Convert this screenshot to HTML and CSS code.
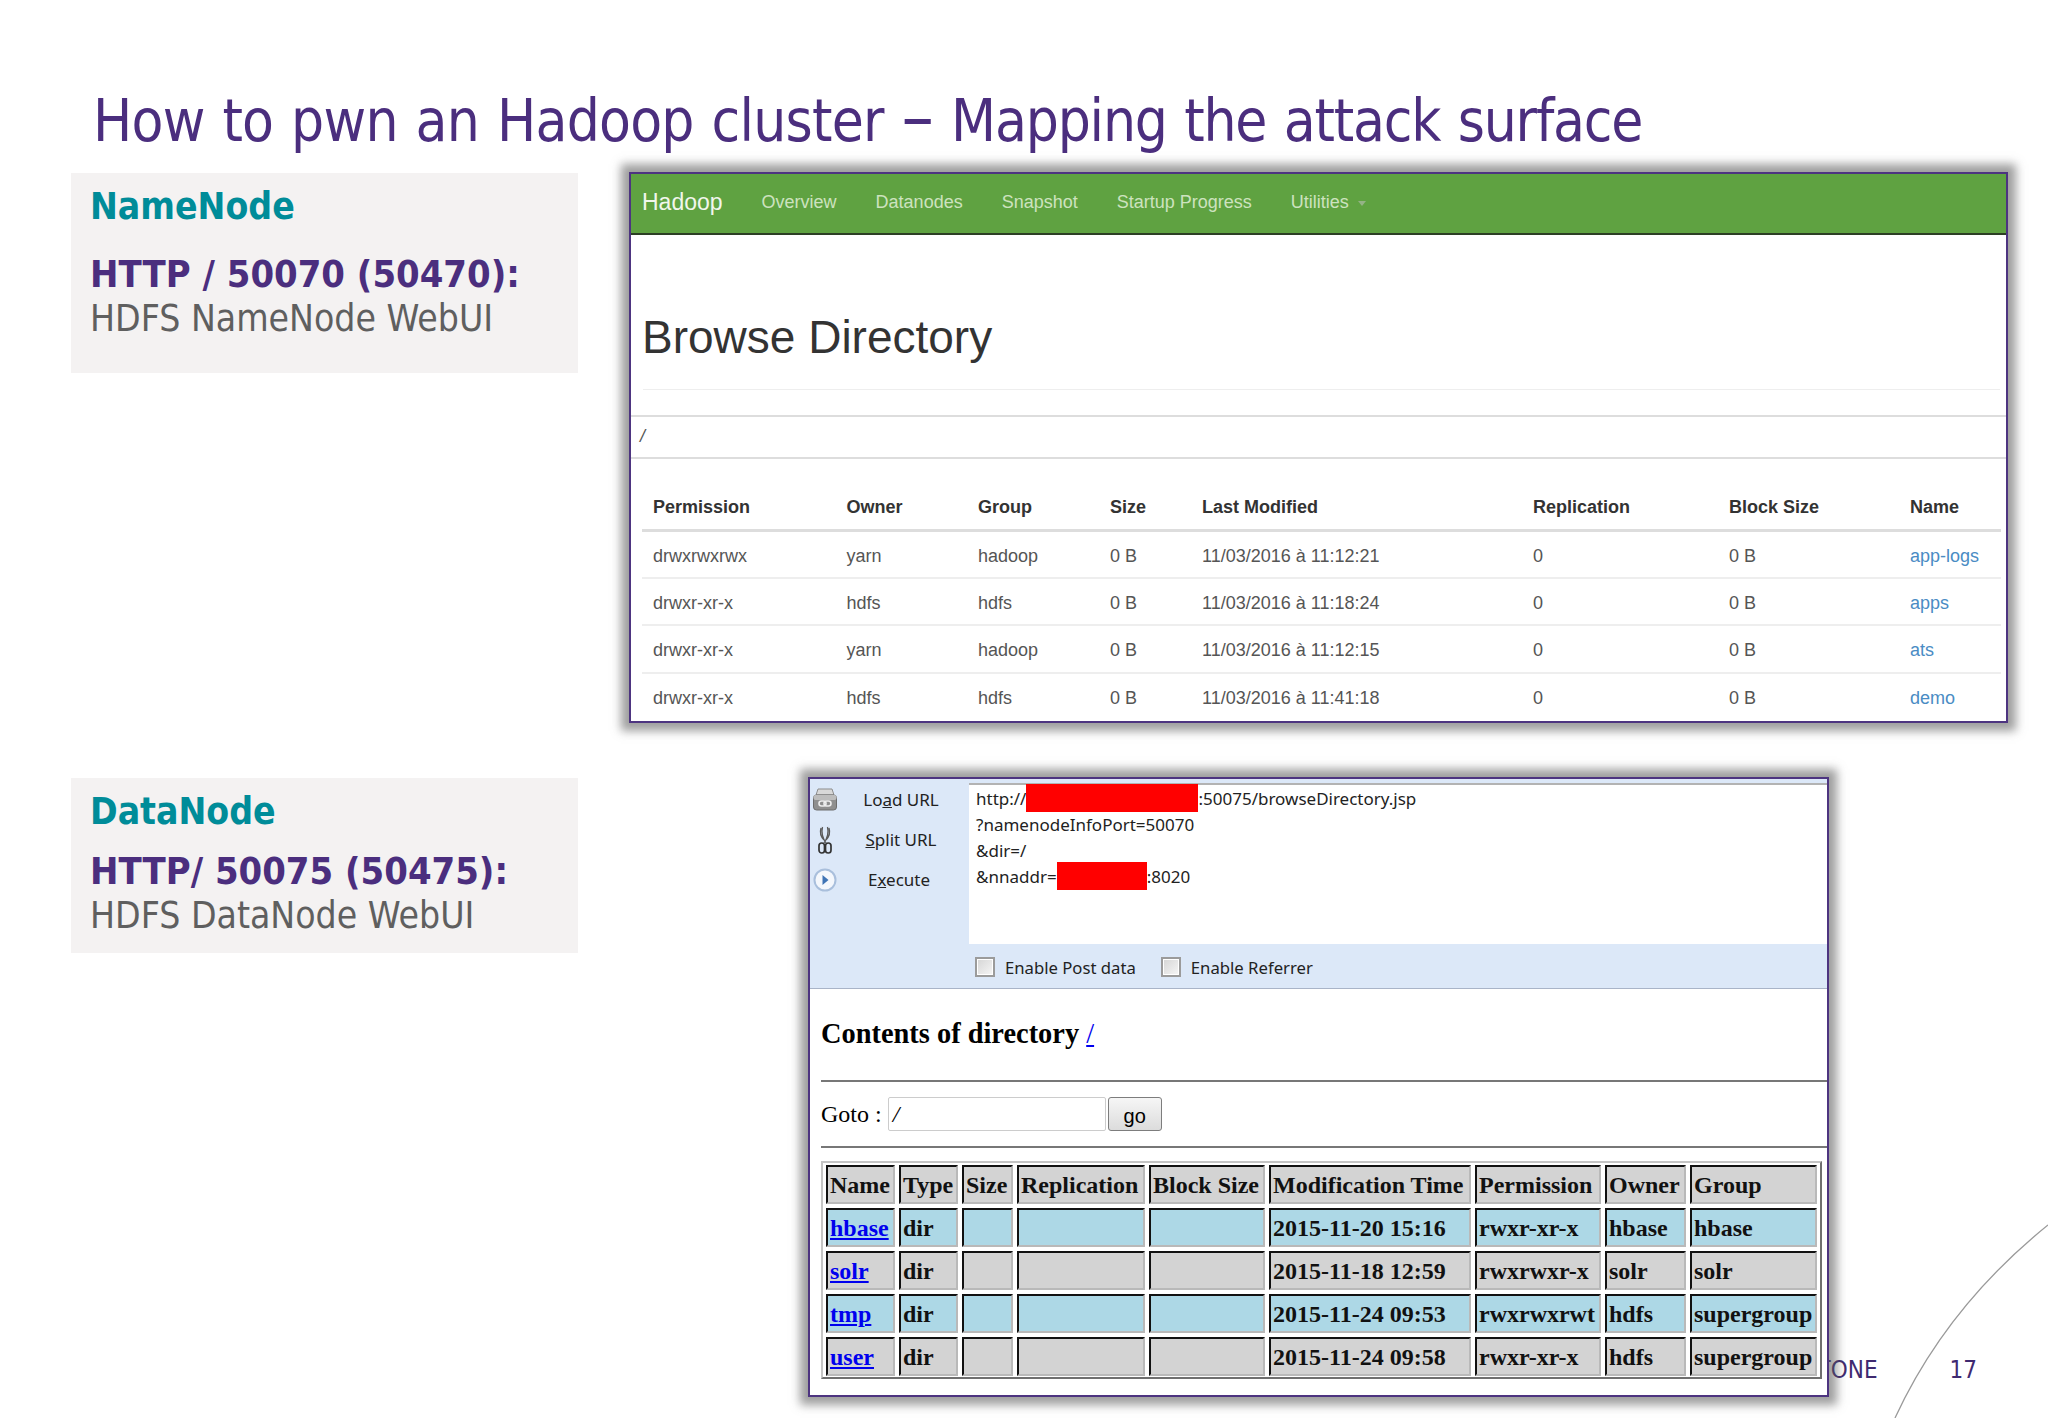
FILE: index.html
```html
<!DOCTYPE html>
<html lang="en">
<head>
<meta charset="utf-8">
<title>How to pwn an Hadoop cluster</title>
<link rel="stylesheet" href="styles.css">
</head>
<body>
<div class="slide">
  <svg class="curve" width="200" height="200" viewBox="0 0 200 200"><path d="M47 200C83 122 138 57 200 7" fill="none" stroke="#9a9a9a" stroke-width="1.3"/></svg>
  <div class="footer"><span class="brand">TONE</span><span class="page-no">17</span></div>

  <h1 class="title">How to pwn an Hadoop cluster <span class="dash">–</span> <span class="tail">Mapping the attack surface</span></h1>

  <section class="row">
    <div class="card card-name">
      <div class="node">NameNode</div>
      <div class="port">HTTP / 50070 (50470):</div>
      <div class="desc">HDFS NameNode WebUI</div>
    </div>
    <div class="shot shot-hadoop">
      <nav class="nav">
        <span class="brandlink">Hadoop</span>
        <span class="navlink">Overview</span>
        <span class="navlink">Datanodes</span>
        <span class="navlink">Snapshot</span>
        <span class="navlink">Startup Progress</span>
        <span class="navlink">Utilities<i class="caret"></i></span>
      </nav>
      <h2 class="browse">Browse Directory</h2>
      <div class="rule"></div>
      <div class="crumb">/</div>
      <table class="files">
        <colgroup><col class="c1"><col class="c2"><col class="c3"><col class="c4"><col class="c5"><col class="c6"><col class="c7"><col class="c8"></colgroup>
        <thead><tr><th>Permission</th><th>Owner</th><th>Group</th><th>Size</th><th>Last Modified</th><th>Replication</th><th>Block Size</th><th>Name</th></tr></thead>
        <tbody>
          <tr><td>drwxrwxrwx</td><td>yarn</td><td>hadoop</td><td>0 B</td><td>11/03/2016 à 11:12:21</td><td>0</td><td>0 B</td><td class="lnk">app-logs</td></tr>
          <tr><td>drwxr-xr-x</td><td>hdfs</td><td>hdfs</td><td>0 B</td><td>11/03/2016 à 11:18:24</td><td>0</td><td>0 B</td><td class="lnk">apps</td></tr>
          <tr><td>drwxr-xr-x</td><td>yarn</td><td>hadoop</td><td>0 B</td><td>11/03/2016 à 11:12:15</td><td>0</td><td>0 B</td><td class="lnk">ats</td></tr>
          <tr><td>drwxr-xr-x</td><td>hdfs</td><td>hdfs</td><td>0 B</td><td>11/03/2016 à 11:41:18</td><td>0</td><td>0 B</td><td class="lnk">demo</td></tr>
        </tbody>
      </table>
    </div>
  </section>

  <section class="row row-data">
    <div class="card card-data">
      <div class="node">DataNode</div>
      <div class="port">HTTP/ 50075 (50475):</div>
      <div class="desc">HDFS DataNode WebUI</div>
    </div>
    <div class="shot shot-data">
      <div class="hackbar">
        <div class="tools">
          <div class="tool">
            <svg class="ico" width="26" height="24" viewBox="0 0 26 24"><path d="M6 1h14l2 6H4z" fill="#d8d8d8" stroke="#8d8d8d"/><rect x="1.5" y="7" width="23" height="15" rx="3" fill="#8f8f8f" stroke="#6d6d6d"/><rect x="1.5" y="7" width="23" height="5" rx="2" fill="#bdbdbd"/><rect x="7" y="13" width="7" height="5" rx="2.5" fill="none" stroke="#eee" stroke-width="1.6"/><rect x="12" y="13" width="7" height="5" rx="2.5" fill="none" stroke="#eee" stroke-width="1.6"/></svg>
            <span class="tool-label">Lo<u>a</u>d URL</span>
          </div>
          <div class="tool">
            <svg class="ico" width="26" height="28" viewBox="0 0 26 28"><path d="M10.5 1c-1.5 6-.5 10 3.5 16M15.5 1c1.5 6 .5 10-3.5 16M9 2c-1.5 5 0 9 3 12M17 2c1.5 5 0 9-3 12" fill="none" stroke="#5a5a5a" stroke-width="1.3"/><rect x="7" y="17" width="5.5" height="10" rx="2.7" fill="none" stroke="#333" stroke-width="1.7"/><rect x="13.5" y="17" width="5.5" height="10" rx="2.7" fill="none" stroke="#333" stroke-width="1.7"/></svg>
            <span class="tool-label"><u>S</u>plit URL</span>
          </div>
          <div class="tool">
            <svg class="ico" width="26" height="26" viewBox="0 0 26 26"><circle cx="13" cy="13" r="10.5" fill="#f4f7fc" stroke="#a9bfdc" stroke-width="2"/><path d="M10.5 8l6 5-6 5z" fill="#3f74b5"/></svg>
            <span class="tool-label tool-label-run">E<u>x</u>ecute</span>
          </div>
        </div>
        <div class="urlbox">http://<span class="redact redact-host"></span>:50075/browseDirectory.jsp<br>?namenodeInfoPort=50070<br>&amp;dir=/<br>&amp;nnaddr=<span class="redact redact-nn"></span>:8020</div>
        <div class="opts">
          <i class="check"></i><span class="opt opt-post">Enable Post data</span>
          <i class="check"></i><span class="opt">Enable Referrer</span>
        </div>
      </div>
      <div class="listing">
        <h3 class="contents">Contents of directory <a class="dirlink">/</a></h3>
        <div class="hr hr-top"></div>
        <div class="goto"><span>Goto :</span><span class="goinput">/</span><span class="gobtn">go</span></div>
        <div class="hr hr-bottom"></div>
        <div class="grid">
          <div class="cell gr">Name</div><div class="cell gr">Type</div><div class="cell gr">Size</div><div class="cell gr">Replication</div><div class="cell gr">Block Size</div><div class="cell gr">Modification Time</div><div class="cell gr">Permission</div><div class="cell gr">Owner</div><div class="cell gr">Group</div>
          <div class="cell bl"><a>hbase</a></div><div class="cell bl">dir</div><div class="cell bl"></div><div class="cell bl"></div><div class="cell bl"></div><div class="cell bl">2015-11-20 15:16</div><div class="cell bl">rwxr-xr-x</div><div class="cell bl">hbase</div><div class="cell bl">hbase</div>
          <div class="cell gr"><a>solr</a></div><div class="cell gr">dir</div><div class="cell gr"></div><div class="cell gr"></div><div class="cell gr"></div><div class="cell gr">2015-11-18 12:59</div><div class="cell gr">rwxrwxr-x</div><div class="cell gr">solr</div><div class="cell gr">solr</div>
          <div class="cell bl"><a>tmp</a></div><div class="cell bl">dir</div><div class="cell bl"></div><div class="cell bl"></div><div class="cell bl"></div><div class="cell bl">2015-11-24 09:53</div><div class="cell bl">rwxrwxrwt</div><div class="cell bl">hdfs</div><div class="cell bl">supergroup</div>
          <div class="cell gr"><a>user</a></div><div class="cell gr">dir</div><div class="cell gr"></div><div class="cell gr"></div><div class="cell gr"></div><div class="cell gr">2015-11-24 09:58</div><div class="cell gr">rwxr-xr-x</div><div class="cell gr">hdfs</div><div class="cell gr">supergroup</div>
        </div>
      </div>
    </div>
  </section>
</div>
</body>
</html>
```

FILE: styles.css
```css
* { box-sizing: border-box; }
html, body { margin: 0; padding: 0; background: #fff; }
.slide {
  position: relative;
  width: 2048px;
  height: 1418px;
  overflow: hidden;
  padding-top: 86px;
  font-family: "DejaVu Sans", "Liberation Sans", sans-serif;
  font-stretch: condensed;
  background: #fff;
}
.title {
  margin: 0 0 16px 93px;
  font-size: 58px;
  line-height: 70px;
  font-weight: 400;
  letter-spacing: -0.75px;
  word-spacing: 2px;
  color: #4b2e7e;
  white-space: nowrap;
}
.dash { font-size: 72px; line-height: 50px; }
.tail { letter-spacing: -1.18px; }
.row { display: flex; align-items: flex-start; padding-left: 71px; position: relative; z-index: 1; }
.row-data { margin-top: 54px; }

.card { width: 507px; margin-top: 1px; padding-left: 19px; background: #f4f2f2; }
.card-name { height: 200px; padding-top: 12px; }
.card-data { height: 175px; padding-top: 12px; }
.node { font-size: 37px; line-height: 44px; font-weight: 700; color: #008c99; }
.port { font-size: 37.8px; line-height: 44px; font-weight: 700; color: #4b2e7e; white-space: nowrap; }
.card-name .port { margin-top: 23px; }
.card-data .port { margin-top: 15px; }
.desc { font-size: 37px; line-height: 44px; margin-top: 1px; color: #5f5f5f; white-space: nowrap; }

.shot {
  flex: none;
  background: #fff;
  border: 2px solid #4d3480;
  box-shadow: 0 0 9px 8px rgba(90, 90, 90, .58);
}
.shot-hadoop {
  width: 1379px;
  height: 551px;
  margin-left: 51px;
  font-family: "Liberation Sans", Arial, sans-serif;
  font-stretch: normal;
}
.nav {
  display: flex;
  align-items: center;
  gap: 39px;
  height: 61px;
  padding: 0 0 3px 11px;
  background: #5fa241;
  border-bottom: 2px solid #2c3f24;
}
.brandlink { font-size: 23px; line-height: 30px; color: #f1f6ec; }
.navlink { font-size: 18px; line-height: 30px; color: #cde2bf; }
.caret {
  display: inline-block;
  margin-left: 9px;
  vertical-align: 2px;
  border: 4px solid transparent;
  border-top: 5px solid #94b386;
  border-bottom: 0;
}
.browse {
  margin: 77px 0 0 11px;
  font-size: 46px;
  line-height: 50px;
  font-weight: 400;
  color: #333;
}
.rule { height: 1px; margin: 27px 6px 0 12px; background: #eee; }
.crumb {
  height: 44px;
  margin-top: 25px;
  padding: 9px 0 0 9px;
  font-size: 18px;
  line-height: 20px;
  font-style: italic;
  color: #555;
  border-top: 2px solid #ddd;
  border-bottom: 2px solid #ddd;
}
.files {
  width: 1359px;
  margin-left: 11px;
  table-layout: fixed;
  border-collapse: collapse;
  font-size: 18px;
  line-height: 20px;
  color: #555;
}
.c1 { width: 193.5px; } .c2 { width: 131.5px; } .c3 { width: 132px; } .c4 { width: 92px; }
.c5 { width: 331px; } .c6 { width: 196px; } .c7 { width: 181px; } .c8 { width: 102px; }
.files th {
  height: 71px;
  padding: 0 0 12px 11px;
  vertical-align: bottom;
  text-align: left;
  font-weight: 700;
  color: #333;
  border-bottom: 3px solid #ddd;
}
.files td { height: 47.5px; padding: 3px 0 0 11px; border-bottom: 2px solid #eee; white-space: nowrap; }
.files tr:last-child td { border-bottom: 0; }
.files .lnk { color: #4a8cc4; }

.shot-data {
  width: 1021px;
  height: 620px;
  margin-left: 230px;
}
.hackbar {
  display: grid;
  grid-template-columns: 159px 1fr;
  grid-template-rows: 165px 44px;
  background: #dce8f8;
  border-bottom: 1px solid #a9b4c8;
  font-family: "Noto Sans", "Open Sans", sans-serif;
  font-stretch: normal;
  font-size: 17px;
  color: #222;
}
.tools { padding-top: 1px; }
.tool { display: flex; align-items: center; height: 40px; padding-left: 2px; }
.ico { flex: none; }
.tool-label { width: 110px; margin-left: 8px; text-align: center; line-height: 24px; white-space: nowrap; }
.tool-label-run { width: 106px; }
.urlbox {
  margin-top: 4px;
  padding: 1px 0 0 7px;
  background: #fff;
  border-top: 2px solid #b3b3b3;
  line-height: 26px;
  white-space: nowrap;
}
.redact { display: inline-block; height: 28px; margin: -2px 0; vertical-align: -5px; background: #f00; }
.redact-host { width: 172px; }
.redact-nn { width: 90px; }
.opts { grid-column: 1 / 3; display: flex; align-items: center; padding: 2px 0 0 165px; font-size: 16.7px; }
.check {
  width: 20px;
  height: 20px;
  background: linear-gradient(135deg, #d5d5d5, #f6f6f6);
  border: 2px solid #9b9b9b;
  box-shadow: inset 0 0 0 1px #fff;
}
.opt { margin-left: 10px; white-space: nowrap; }
.opt-post { margin-right: 25px; }

.listing { padding-left: 11px; font-family: "Liberation Serif", "Times New Roman", serif; font-stretch: normal; color: #000; }
.contents { margin: 29px 0 0; font-size: 28.4px; line-height: 32px; font-weight: 700; }
.dirlink { color: #0000ee; text-decoration: underline; font-weight: 400; }
.hr { height: 2px; background: #777; }
.hr-top { margin-top: 30px; }
.goto { display: flex; align-items: center; height: 34px; margin-top: 15px; font-size: 24px; }
.goinput {
  width: 218px;
  height: 34px;
  margin-left: 6px;
  padding-left: 4px;
  line-height: 32px;
  font-style: italic;
  background: #fff;
  border: 1px solid #ccc;
  border-radius: 2px;
}
.gobtn {
  width: 54px;
  height: 34px;
  margin-left: 2px;
  padding-top: 2px;
  text-align: center;
  font-family: "Liberation Sans", Arial, sans-serif;
  font-size: 20px;
  line-height: 32px;
  background: linear-gradient(#f6f6f6, #dcdcdc);
  border: 1px solid #7d7d7d;
  border-radius: 3px;
}
.hr-bottom { margin-top: 15px; }
.grid {
  display: grid;
  grid-template-columns: 69px 59px 51px 128px 116px 202px 126px 81px 127px;
  grid-auto-rows: 39px;
  gap: 4px;
  width: 1001px;
  height: 218px;
  margin-top: 13px;
  padding: 2px 3px;
  border: 2px solid;
  border-color: #c4c4c4 #6f6f6f #6f6f6f #c4c4c4;
  font-size: 24px;
  font-weight: 700;
  color: #111;
}
.cell {
  display: flex;
  align-items: center;
  padding: 1px 0 0 2px;
  border: 2px solid;
  border-color: #111 #b9b9b9 #b9b9b9 #111;
  white-space: nowrap;
}
.gr { background: #d3d3d3; }
.bl { background: #add8e6; }
.cell a { color: #0000ee; text-decoration: underline; }

.curve { position: absolute; right: 0; bottom: 0; }
.footer {
  position: absolute;
  right: 71px;
  bottom: 33px;
  display: flex;
  align-items: baseline;
  font-size: 24px;
  line-height: 30px;
  color: #3f2a70;
}
.page-no { margin-left: 72px; }
```
